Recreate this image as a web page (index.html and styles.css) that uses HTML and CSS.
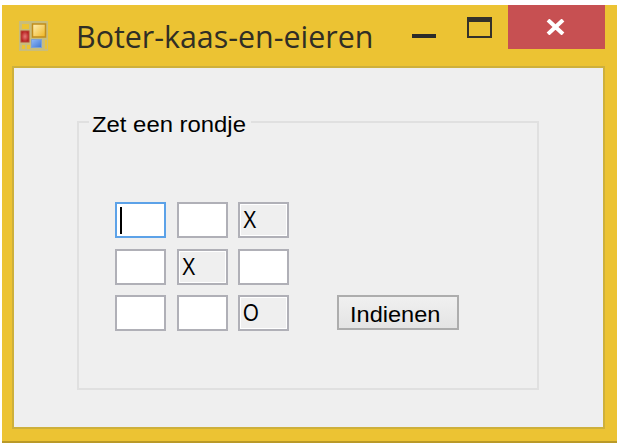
FILE: index.html
```html
<!DOCTYPE html>
<html lang="nl">
<head>
<meta charset="utf-8">
<title>Boter-kaas-en-eieren</title>
<link rel="stylesheet" href="styles.css">
</head>
<body>
<main class="window">
  <header class="titlebar">
    <svg class="app-icon" width="29" height="30" viewBox="0 0 29 30">
      <defs>
        <linearGradient id="gold" x1="0" y1="0" x2="1" y2="1"><stop offset="0" stop-color="#fff0b8"/><stop offset="1" stop-color="#efb51f"/></linearGradient>
        <linearGradient id="blue" x1="0" y1="0" x2="1" y2="1"><stop offset="0" stop-color="#93baf5"/><stop offset="1" stop-color="#3e76d4"/></linearGradient>
        <radialGradient id="red"><stop offset="0" stop-color="#e77a78"/><stop offset="1" stop-color="#b6201f"/></radialGradient>
      </defs>
      <path fill="#c9bd7b" fill-rule="evenodd" d="M0 0H29V30H0ZM3 3V8H10V3ZM3 24V28H6V24ZM8 24V28H11V24ZM26 19V28H28V19Z"/>
      <rect x="2" y="10" width="8" height="11" fill="url(#red)" stroke="#b5493a"/>
      <rect x="13.500" y="3" width="13" height="13" fill="url(#gold)" stroke="#c18d1c" stroke-width="1.500"/>
      <rect x="12.500" y="18.500" width="10" height="8" fill="url(#blue)" stroke="#7fa2d0"/>
    </svg>
    <h1 class="title">Boter-kaas-en-eieren</h1>
    <span class="minimize"></span>
    <span class="maximize"></span>
    <span class="close"><svg width="19" height="16" viewBox="0 0 19 16"><path d="M2 1L17 15M17 1L2 15" stroke="#fff" stroke-width="4"/></svg></span>
  </header>
  <section class="client">
    <fieldset class="group">
      <legend class="legend"><span class="caption">Zet een rondje</span></legend>
      <div class="board">
        <span class="cell focused"><i class="caret"></i></span><span class="cell"></span><span class="cell filled"><b class="mark">X</b></span>
        <span class="cell"></span><span class="cell filled"><b class="mark">X</b></span><span class="cell"></span>
        <span class="cell"></span><span class="cell"></span><span class="cell filled"><b class="mark">O</b></span>
      </div>
      <button class="submit"><span class="action">Indienen</span></button>
    </fieldset>
  </section>
</main>
</body>
</html>
```
FILE: styles.css
```css
* { box-sizing: border-box; }
body {
  margin: 0;
  height: 444px;
  padding: 5px 5px 1px 2px;
  overflow: hidden;
  background: #fff;
  font-family: "Liberation Sans", Arial, sans-serif;
}
.window {
  width: 615px;
  height: 438px;
  padding: 0 12px 12px 10px;
  background: #ecc333;
  border-bottom: 2px solid #ba9a28;
}
.titlebar { display: flex; height: 61px; align-items: flex-start; }
.app-icon { flex: none; margin: 16px 0 0 7px; }
.title {
  flex: none;
  width: 299px;
  margin: 11px 0 0 28px;
  font: 400 31px/40px "Open Sans", "Noto Sans", sans-serif;
  color: #302e25;
  white-space: nowrap;
  transform: scaleX(.98);
  transform-origin: left;
}
.minimize { flex: none; width: 24px; height: 4px; margin: 29px 0 0 37px; background: #2b2b29; }
.maximize {
  flex: none;
  width: 25px;
  height: 21px;
  margin: 12px 0 0 31px;
  border: 2px solid #34312a;
  border-top-width: 5px;
}
.close {
  flex: none;
  display: flex;
  width: 97px;
  height: 44px;
  margin-left: 16px;
  padding: 14px 0 0 38px;
  background: #c75052;
}
.client {
  width: 593px;
  height: 363px;
  padding: 42px 0 0 63px;
  background: #efefef;
  border: 2px solid #ceb03b;
}
.group {
  display: flex;
  width: 462px;
  height: 280px;
  margin: 0;
  padding: 68px 0 0 36px;
  border: 2px solid #e0e0e0;
}
.legend {
  width: 162px;
  height: 24px;
  margin-left: -26px;
  padding: 0 0 0 3px;
  font-size: 22px;
  line-height: 30px;
  white-space: nowrap;
}
.caption { display: inline-block; transform: scaleX(1.085); transform-origin: left; }
.board {
  display: grid;
  grid-template: repeat(3, 36px) / repeat(3, 51px);
  gap: 10.5px;
}
.cell {
  padding: 3px 0 0 3px;
  background: #fff;
  border: 2px solid #b0b0b7;
  font-size: 23px;
  line-height: 27px;
}
.filled { background: #efefef; box-shadow: inset 0 0 0 1px #fff; }
.focused { border-color: #5ca2e8; }
.mark { display: block; width: 16px; font-weight: 400; transform: scaleX(.88); transform-origin: left; }
.caret { display: block; width: 2px; height: 27px; background: #000; }
.submit {
  width: 122px;
  height: 35px;
  margin: 93px 0 0 47.5px;
  padding: 4px 0 0 11px;
  background: linear-gradient(#f0f0f0, #e4e4e4);
  border: 2px solid #adadad;
  border-radius: 0;
  font: 22px/28px "Liberation Sans", Arial, sans-serif;
  text-align: left;
  color: #000;
}
.action { display: inline-block; transform: scaleX(1.07); transform-origin: left; }
```
